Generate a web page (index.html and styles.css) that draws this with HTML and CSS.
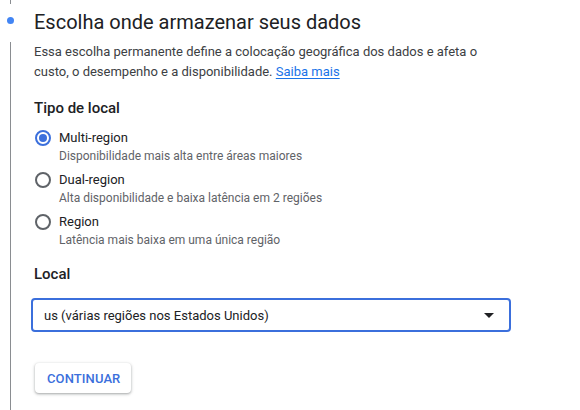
FILE: index.html
```html
<!DOCTYPE html>
<html lang="pt-BR">
<head>
<meta charset="utf-8">
<title>Escolha onde armazenar seus dados</title>
<link rel="stylesheet" href="styles.css">
</head>
<body>
<div class="step">
  <div class="rail rail-head">
    <span class="stub"></span>
    <span class="dot"></span>
  </div>
  <h1 class="title">Escolha onde armazenar seus dados</h1>
  <div class="rail rail-body"><span class="line"></span></div>
  <div class="content">
    <p class="desc">Essa escolha permanente define a colocação geográfica dos dados e afeta o custo, o desempenho e a disponibilidade. <a class="link" href="#">Saiba mais</a></p>

    <h2 class="label">Tipo de local</h2>
    <div class="options">
      <div class="option">
        <span class="radio checked"></span>
        <div class="opt-text">
          <div class="opt-main">Multi-region</div>
          <div class="opt-sub">Disponibilidade mais alta entre áreas maiores</div>
        </div>
      </div>
      <div class="option">
        <span class="radio"></span>
        <div class="opt-text">
          <div class="opt-main">Dual-region</div>
          <div class="opt-sub">Alta disponibilidade e baixa latência em 2 regiões</div>
        </div>
      </div>
      <div class="option">
        <span class="radio"></span>
        <div class="opt-text">
          <div class="opt-main">Region</div>
          <div class="opt-sub">Latência mais baixa em uma única região</div>
        </div>
      </div>
    </div>

    <h2 class="label label-local">Local</h2>
    <div class="select">
      <span class="select-value">us (várias regiões nos Estados Unidos)</span>
      <span class="caret"></span>
    </div>

    <button class="btn" type="button">CONTINUAR</button>
  </div>
</div>
</body>
</html>
```

FILE: styles.css
```css
html, body {
  margin: 0;
  padding: 0;
  background: #ffffff;
}

body {
  font-family: Roboto, "Liberation Sans", Arial, sans-serif;
  color: #202124;
  overflow: hidden;
}

.step {
  display: grid;
  grid-template-columns: 21px 1fr;
  grid-template-rows: 42px 1fr;
  column-gap: 13px;
  min-height: 100vh;
}

.rail {
  position: relative;
}

.stub {
  position: absolute;
  left: 10px;
  top: 0;
  width: 1px;
  height: 4px;
  background: #8a8d91;
}

.dot {
  position: absolute;
  left: 7px;
  top: 17px;
  width: 7px;
  height: 7px;
  border-radius: 50%;
  background: #4285f4;
}

.rail-body {
  display: flex;
  justify-content: flex-start;
}

.line {
  margin-left: 10px;
  width: 1px;
  background: #8a8d91;
  height: 100%;
}

.title {
  margin: 8px 0 0;
  font-size: 20px;
  line-height: 28px;
  font-weight: 400;
  color: #202124;
  white-space: nowrap;
}

.content {
  padding-bottom: 10px;
}

.desc {
  margin: 0;
  width: 460px;
  font-size: 13px;
  line-height: 20px;
  color: #3c4043;
}

.link {
  color: #1a73e8;
  text-decoration: underline;
  text-underline-offset: 2px;
}

.label {
  margin: 14px 0 0;
  font-size: 15px;
  line-height: 24px;
  font-weight: 500;
  color: #202124;
}

.options {
  display: flex;
  flex-direction: column;
  gap: 6px;
  margin-top: 8px;
}

.option {
  display: flex;
  align-items: flex-start;
  gap: 8px;
}

.radio {
  box-sizing: border-box;
  flex: none;
  width: 16px;
  height: 16px;
  margin: 2px 0 0 1px;
  border: 2px solid #5f6368;
  border-radius: 50%;
  display: flex;
  align-items: center;
  justify-content: center;
}

.radio.checked {
  border-color: #3b6fdc;
}

.radio.checked::after {
  content: "";
  width: 8px;
  height: 8px;
  border-radius: 50%;
  background: #3b6fdc;
}

.opt-main {
  font-size: 13px;
  line-height: 20px;
  color: #202124;
}

.opt-sub {
  font-size: 12px;
  line-height: 16px;
  color: #5f6368;
}

.label-local {
  margin-top: 14px;
}

.select {
  box-sizing: border-box;
  margin: 12px 0 0 -3px;
  width: 480px;
  height: 34px;
  border: 2px solid #3b6fdc;
  border-radius: 4px;
  display: flex;
  align-items: center;
  justify-content: space-between;
  padding: 0 15px 0 11px;
}

.select-value {
  font-size: 13px;
  color: #202124;
}

.caret {
  width: 0;
  height: 0;
  border-left: 5px solid transparent;
  border-right: 5px solid transparent;
  border-top: 5px solid #202124;
}

.btn {
  display: block;
  margin: 31px 0 0 1px;
  height: 30px;
  padding: 0 11px 0 12px;
  border: none;
  border-radius: 4px;
  background: #ffffff;
  box-shadow: 0 1px 2px rgba(60, 64, 67, 0.3), 0 1px 3px 1px rgba(60, 64, 67, 0.15);
  font-family: Roboto, "Liberation Sans", Arial, sans-serif;
  font-size: 13px;
  font-weight: 500;
  color: #3b6fdc;
  letter-spacing: 0.1px;
}
```
